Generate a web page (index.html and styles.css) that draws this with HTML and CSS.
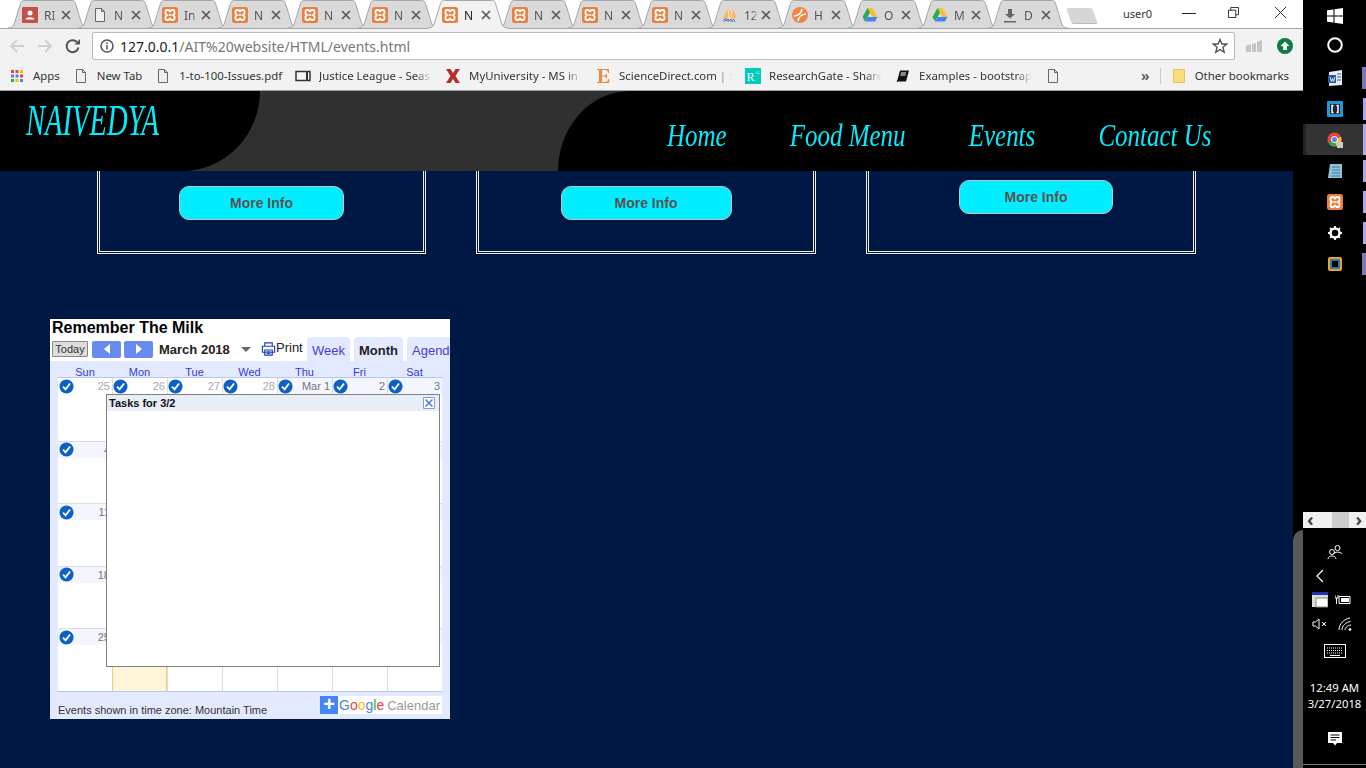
FILE: index.html
```html
<!DOCTYPE html>
<html lang="en">
<head>
    <meta charset="UTF-8">
    <title>Naivedya - Events</title>
    <link rel="stylesheet" href="styles.css">
</head>
<body>

<svg class="defs" aria-hidden="true">
    <symbol id="tab-bg" viewBox="0 0 80 29">
        <path d="M0 28C4 28 5.5 26 6.5 23L12.5 3.5C13 1.5 14.5 .5 16.5 .5H63.5C65.5 .5 67 1.5 67.5 3.5L73.5 23C74.500 26 76 28 80 28" fill="#d9d9d9" stroke="#a6a6a6"/>
    </symbol>
    <symbol id="tab-bg-active" viewBox="0 0 80 29">
        <path d="M0 28C4 28 5.5 26 6.5 23L12.5 3.5C13 1.5 14.5 .5 16.5 .5H63.5C65.5 .5 67 1.5 67.5 3.5L73.5 23C74.500 26 76 28 80 28V29H0Z" fill="#f2f2f2"/>
        <path d="M0 28C4 28 5.5 26 6.5 23L12.5 3.5C13 1.5 14.5 .5 16.5 .5H63.5C65.5 .5 67 1.5 67.5 3.5L73.5 23C74.500 26 76 28 80 28" fill="none" stroke="#a6a6a6"/>
    </symbol>
    <symbol id="ic-xampp" viewBox="0 0 16 16">
        <rect width="16" height="16" rx="2.5" fill="#ec7f3e"/>
        <path d="M3.5 4.5Q3.500 3 5 3H6.500L8 4.500 9.500 3H11Q12.500 3 12.500 4.500V6.500L11 8 12.500 9.500V11.500Q12.500 13 11 13H9.500L8 11.500 6.500 13H5Q3.500 13 3.500 11.500V9.500L5 8 3.500 6.500Z" fill="none" stroke="#fff" stroke-width="1.8" stroke-linejoin="round"/>
        <path d="M6.5 8H9.500" stroke="#fff" stroke-width="1.5"/>
    </symbol>
    <symbol id="ic-doc" viewBox="0 0 16 16">
        <path d="M3.5 1.500H9.500L12.500 4.500V14.500H3.500ZM9.500 1.500V4.500H12.500" fill="#efefef" stroke="#666"/>
    </symbol>
    <symbol id="ic-drive" viewBox="0 0 16 16">
        <path d="M5.5 1H10.500L15.500 10H10.500Z" fill="#fbc02d"/>
        <path d="M5.5 1L.5 10 3 14.500 8 5.500Z" fill="#2da94f"/>
        <path d="M3 14.5H13L15.500 10H5.500Z" fill="#4285f4"/>
    </symbol>
    <symbol id="ic-x" viewBox="0 0 10 10">
        <path d="M1 1L9 9M9 1L1 9" stroke="#5a5a5a" stroke-width="1.7" fill="none"/>
    </symbol>
    <symbol id="ic-check" viewBox="0 0 16 16">
        <circle cx="8" cy="8" r="7.5" fill="#0b62c4"/>
        <path d="M4.3 8.200L7 11 11.800 4.800" fill="none" stroke="#fff" stroke-width="2"/>
    </symbol>
</svg>

<div class="screen">
    <div class="window">
        <div class="chrome">
            <div class="tabstrip">
                <div class="tabs">
                    <div class="tab"><svg class="tab-shape"><use href="#tab-bg"/></svg>
                        <svg class="favicon" viewBox="0 0 16 16"><rect width="16" height="16" rx="1" fill="#c5504a"/><circle cx="8" cy="6" r="2.5" fill="#fff"/><path d="M3.5 12.500C4 9.500 12 9.500 12.500 12.500Z" fill="#fff"/></svg>
                        <span class="tab-title">RI</span><svg class="tab-x"><use href="#ic-x"/></svg></div>
                    <div class="tab"><svg class="tab-shape"><use href="#tab-bg"/></svg>
                        <svg class="favicon"><use href="#ic-doc"/></svg>
                        <span class="tab-title">N</span><svg class="tab-x"><use href="#ic-x"/></svg></div>
                    <div class="tab"><svg class="tab-shape"><use href="#tab-bg"/></svg>
                        <svg class="favicon"><use href="#ic-xampp"/></svg>
                        <span class="tab-title">In</span><svg class="tab-x"><use href="#ic-x"/></svg></div>
                    <div class="tab"><svg class="tab-shape"><use href="#tab-bg"/></svg>
                        <svg class="favicon"><use href="#ic-xampp"/></svg>
                        <span class="tab-title">N</span><svg class="tab-x"><use href="#ic-x"/></svg></div>
                    <div class="tab"><svg class="tab-shape"><use href="#tab-bg"/></svg>
                        <svg class="favicon"><use href="#ic-xampp"/></svg>
                        <span class="tab-title">N</span><svg class="tab-x"><use href="#ic-x"/></svg></div>
                    <div class="tab"><svg class="tab-shape"><use href="#tab-bg"/></svg>
                        <svg class="favicon"><use href="#ic-xampp"/></svg>
                        <span class="tab-title">N</span><svg class="tab-x"><use href="#ic-x"/></svg></div>
                    <div class="tab tab-active"><svg class="tab-shape"><use href="#tab-bg-active"/></svg>
                        <svg class="favicon"><use href="#ic-xampp"/></svg>
                        <span class="tab-title">N</span><svg class="tab-x"><use href="#ic-x"/></svg></div>
                    <div class="tab"><svg class="tab-shape"><use href="#tab-bg"/></svg>
                        <svg class="favicon"><use href="#ic-xampp"/></svg>
                        <span class="tab-title">N</span><svg class="tab-x"><use href="#ic-x"/></svg></div>
                    <div class="tab"><svg class="tab-shape"><use href="#tab-bg"/></svg>
                        <svg class="favicon"><use href="#ic-xampp"/></svg>
                        <span class="tab-title">N</span><svg class="tab-x"><use href="#ic-x"/></svg></div>
                    <div class="tab"><svg class="tab-shape"><use href="#tab-bg"/></svg>
                        <svg class="favicon"><use href="#ic-xampp"/></svg>
                        <span class="tab-title">N</span><svg class="tab-x"><use href="#ic-x"/></svg></div>
                    <div class="tab"><svg class="tab-shape"><use href="#tab-bg"/></svg>
                        <svg class="favicon" viewBox="0 0 16 16"><path d="M1 11L6 1 8 5 10 1 15 11Z" fill="#f5b862"/><path d="M6 2L7 11M10 2L9 11" stroke="#fff" stroke-width=".7"/><path d="M2 15V12H5V13.500H3M6 15V12L7.500 14 9 12V15M10 15L11.500 12 13 15" fill="none" stroke="#4a5a9a" stroke-width=".8"/></svg>
                        <span class="tab-title">12</span><svg class="tab-x"><use href="#ic-x"/></svg></div>
                    <div class="tab"><svg class="tab-shape"><use href="#tab-bg"/></svg>
                        <svg class="favicon" viewBox="0 0 16 16"><circle cx="8" cy="8" r="8" fill="#f0854a"/><path d="M2 9C5 9 9 7 10 2M14 7C11 7 7 9 6 14" fill="none" stroke="#fff" stroke-width="1.6"/></svg>
                        <span class="tab-title">H</span><svg class="tab-x"><use href="#ic-x"/></svg></div>
                    <div class="tab"><svg class="tab-shape"><use href="#tab-bg"/></svg>
                        <svg class="favicon"><use href="#ic-drive"/></svg>
                        <span class="tab-title">O</span><svg class="tab-x"><use href="#ic-x"/></svg></div>
                    <div class="tab"><svg class="tab-shape"><use href="#tab-bg"/></svg>
                        <svg class="favicon"><use href="#ic-drive"/></svg>
                        <span class="tab-title">M</span><svg class="tab-x"><use href="#ic-x"/></svg></div>
                    <div class="tab"><svg class="tab-shape"><use href="#tab-bg"/></svg>
                        <svg class="favicon" viewBox="0 0 16 16"><path d="M6 2H10V7H13L8 11.500 3 7H6ZM2 14H14V15.500H2Z" fill="#666"/></svg>
                        <span class="tab-title">D</span><svg class="tab-x"><use href="#ic-x"/></svg></div>
                </div>
                <div class="new-tab"></div>
                <span class="profile">user0</span>
                <div class="win-controls">
                    <svg class="win-min" viewBox="0 0 16 12"><path d="M1 6.500H15" stroke="#222"/></svg>
                    <svg class="win-max" viewBox="0 0 12 12"><path d="M.5 3.500H8.500V11.500H.5ZM3 3.500V.5H11.500V8.500H8.500" fill="none" stroke="#222"/></svg>
                    <svg class="win-close" viewBox="0 0 14 14"><path d="M1 1L13 13M13 1L1 13" stroke="#222"/></svg>
                </div>
            </div>

            <div class="toolbar">
                <svg class="nav-ic" viewBox="0 0 16 16"><path d="M15 8H2M8 2L2 8 8 14" fill="none" stroke="#cfcfcf" stroke-width="1.8"/></svg>
                <svg class="nav-ic" viewBox="0 0 16 16"><path d="M1 8H14M8 2L14 8 8 14" fill="none" stroke="#cfcfcf" stroke-width="1.8"/></svg>
                <svg class="nav-ic" viewBox="0 0 16 16"><path d="M13.5 9.500A6 6 0 1 1 12 4" fill="none" stroke="#555" stroke-width="2"/><path d="M9.5 6.500H15V1Z" fill="#555"/></svg>
                <div class="omnibox">
                    <svg class="info-ic" viewBox="0 0 14 14"><circle cx="7" cy="7" r="6" fill="none" stroke="#555" stroke-width="1.5"/><path d="M7 6V10.500M7 3.300V5" stroke="#555" stroke-width="1.5"/></svg>
                    <span class="url"><b>127.0.0.1</b>/AIT%20website/HTML/events.html</span>
                    <svg class="star-ic" viewBox="0 0 16 16"><path d="M8 1.500L9.900 6H14.800L10.900 9.300 12.200 14.300 8 11.600 3.800 14.300 5.100 9.300 1.200 6H6.100Z" fill="none" stroke="#555" stroke-width="1.4"/></svg>
                </div>
                <svg class="ext-ic" viewBox="0 0 16 16"><path d="M0 8L5 6V14H0ZM6 6L10 5V14H6ZM11 4L16 2V14H11Z" fill="#c4c4c4"/></svg>
                <svg class="ext-ic" viewBox="0 0 16 16"><circle cx="8" cy="8" r="8" fill="#0c7c3f"/><path d="M8 3.500L12.500 8H10V12H6V8H3.500Z" fill="#fff"/></svg>
            </div>

            <div class="bookmarks">
                <a class="bm"><svg class="bm-ic" viewBox="0 0 16 16"><g fill="#ea4335"><rect x="2" y="2" width="3" height="3"/><rect x="6.5" y="2" width="3" height="3"/></g><rect x="11" y="2" width="3" height="3" fill="#fbbc05"/><g fill="#4285f4"><rect x="2" y="6.5" width="3" height="3"/><rect x="6.5" y="6.5" width="3" height="3"/></g><rect x="11" y="6.5" width="3" height="3" fill="#ea4335"/><rect x="2" y="11" width="3" height="3" fill="#34a853"/><rect x="6.5" y="11" width="3" height="3" fill="#fbbc05"/><rect x="11" y="11" width="3" height="3" fill="#4285f4"/></svg><span>Apps</span></a>
                <a class="bm"><svg class="bm-ic"><use href="#ic-doc"/></svg><span>New Tab</span></a>
                <a class="bm"><svg class="bm-ic"><use href="#ic-doc"/></svg><span>1-to-100-Issues.pdf</span></a>
                <a class="bm bm-cut"><svg class="bm-ic" viewBox="0 0 16 16"><path d="M1 3.500H15V12.500H1Z" fill="none" stroke="#333" stroke-width="1.5"/><path d="M12 3V13" stroke="#333" stroke-width="2"/></svg><span>Justice League - Seas</span></a>
                <a class="bm bm-cut"><svg class="bm-ic" viewBox="0 0 16 16"><path d="M1 1H5.500L8 5 10.500 1H15L10.500 8 15 15H10.500L8 11 5.500 15H1L5.500 8Z" fill="#b5302a"/></svg><span>MyUniversity - MS in</span></a>
                <a class="bm bm-cut"><svg class="bm-ic" viewBox="0 0 16 16"><path d="M2 1H14V5H13C13 3 12 2 10 2H7V7.500H9.500C11 7.500 11 6.500 11 6H12V10.500H11C11 9.500 11 8.500 9.500 8.500H7V14H10C12 14 13 13 13.500 11H14.500L14 15H2V14C4 14 4 14 4 12V4C4 2 4 2 2 2Z" fill="#f0883c"/></svg><span>ScienceDirect.com | S</span></a>
                <a class="bm bm-cut"><svg class="bm-ic" viewBox="0 0 16 16"><rect width="16" height="16" fill="#00ccbb"/><text class="rg-text" x="1.5" y="13">R</text><text class="rg-sup" x="11" y="6">G</text></svg><span>ResearchGate - Share</span></a>
                <a class="bm bm-cut"><svg class="bm-ic" viewBox="0 0 16 16"><path d="M5 2.500H14L11 13.500H2Z" fill="#111"/><path d="M3 12L2 14" stroke="#111"/><path d="M6 5H11M5.500 7H10.500" stroke="#fff"/></svg><span>Examples - bootstrap</span></a>
                <a class="bm"><svg class="bm-ic"><use href="#ic-doc"/></svg></a>
                <div class="bm-right">
                    <span class="bm-more">&raquo;</span>
                    <span class="bm-sep"></span>
                    <a class="bm"><svg class="bm-ic" viewBox="0 0 16 16"><path d="M2.5 1.500H13.500V14.500H2.500Z" fill="#fddc78" stroke="#e8c25a"/></svg><span>Other bookmarks</span></a>
                </div>
            </div>
        </div>

        <div class="site">
            <header class="site-header">
                <div class="brand"><span>NAIVEDYA</span></div>
                <nav class="site-nav">
                    <div class="nav-list">
                        <a>Home</a>
                        <a>Food Menu</a>
                        <a>Events</a>
                        <a>Contact Us</a>
                    </div>
                </nav>
            </header>

            <div class="site-body">
                <main class="content">
                    <div class="card-row">
                        <div class="card card-one"><button class="more-btn">More Info</button></div>
                        <div class="card card-two"><button class="more-btn">More Info</button></div>
                        <div class="card card-three"><button class="more-btn">More Info</button></div>
                    </div>

                    <div class="cal">
                        <div class="cal-title">Remember The Milk</div>
                        <div class="cal-bar">
                            <button class="cal-today">Today</button>
                            <span class="cal-arrow"><i class="arrow-left"></i></span>
                            <span class="cal-arrow"><i class="arrow-right"></i></span>
                            <span class="cal-month">March 2018</span>
                            <i class="cal-caret"></i>
                            <svg class="cal-print" viewBox="0 0 16 16"><path d="M4 5V1.500H12V5M1.500 5H14.500V11.500H1.500ZM4 9H12V14.500H4ZM6 11H10M6 12.800H10" fill="#fff" stroke="#1a3ec0" stroke-width="1.2"/></svg>
                            <span class="cal-print-label">Print</span>
                            <span class="cal-tab cal-tab-week">Week</span>
                            <span class="cal-tab cal-tab-active">Month</span>
                            <span class="cal-tab">Agenda</span>
                        </div>
                        <div class="cal-body">
                            <div class="cal-week">
                                <span>Sun</span><span>Mon</span><span>Tue</span><span>Wed</span><span>Thu</span><span>Fri</span><span>Sat</span>
                            </div>
                            <div class="cal-grid">
                                <div class="day other"><div class="day-head"><svg class="day-check"><use href="#ic-check"/></svg>25</div></div>
                                <div class="day other"><div class="day-head"><svg class="day-check"><use href="#ic-check"/></svg>26</div></div>
                                <div class="day other"><div class="day-head"><svg class="day-check"><use href="#ic-check"/></svg>27</div></div>
                                <div class="day other"><div class="day-head"><svg class="day-check"><use href="#ic-check"/></svg>28</div></div>
                                <div class="day"><div class="day-head"><svg class="day-check"><use href="#ic-check"/></svg>Mar 1</div></div>
                                <div class="day"><div class="day-head"><svg class="day-check"><use href="#ic-check"/></svg>2</div></div>
                                <div class="day"><div class="day-head"><svg class="day-check"><use href="#ic-check"/></svg>3</div></div>

                                <div class="day"><div class="day-head"><svg class="day-check"><use href="#ic-check"/></svg>4</div></div>
                                <div class="day"><div class="day-head"><svg class="day-check"><use href="#ic-check"/></svg>5</div></div>
                                <div class="day"><div class="day-head"><svg class="day-check"><use href="#ic-check"/></svg>6</div></div>
                                <div class="day"><div class="day-head"><svg class="day-check"><use href="#ic-check"/></svg>7</div></div>
                                <div class="day"><div class="day-head"><svg class="day-check"><use href="#ic-check"/></svg>8</div></div>
                                <div class="day"><div class="day-head"><svg class="day-check"><use href="#ic-check"/></svg>9</div></div>
                                <div class="day"><div class="day-head"><svg class="day-check"><use href="#ic-check"/></svg>10</div></div>

                                <div class="day"><div class="day-head"><svg class="day-check"><use href="#ic-check"/></svg>11</div></div>
                                <div class="day"><div class="day-head"><svg class="day-check"><use href="#ic-check"/></svg>12</div></div>
                                <div class="day"><div class="day-head"><svg class="day-check"><use href="#ic-check"/></svg>13</div></div>
                                <div class="day"><div class="day-head"><svg class="day-check"><use href="#ic-check"/></svg>14</div></div>
                                <div class="day"><div class="day-head"><svg class="day-check"><use href="#ic-check"/></svg>15</div></div>
                                <div class="day"><div class="day-head"><svg class="day-check"><use href="#ic-check"/></svg>16</div></div>
                                <div class="day"><div class="day-head"><svg class="day-check"><use href="#ic-check"/></svg>17</div></div>

                                <div class="day"><div class="day-head"><svg class="day-check"><use href="#ic-check"/></svg>18</div></div>
                                <div class="day"><div class="day-head"><svg class="day-check"><use href="#ic-check"/></svg>19</div></div>
                                <div class="day"><div class="day-head"><svg class="day-check"><use href="#ic-check"/></svg>20</div></div>
                                <div class="day"><div class="day-head"><svg class="day-check"><use href="#ic-check"/></svg>21</div></div>
                                <div class="day"><div class="day-head"><svg class="day-check"><use href="#ic-check"/></svg>22</div></div>
                                <div class="day"><div class="day-head"><svg class="day-check"><use href="#ic-check"/></svg>23</div></div>
                                <div class="day"><div class="day-head"><svg class="day-check"><use href="#ic-check"/></svg>24</div></div>

                                <div class="day"><div class="day-head"><svg class="day-check"><use href="#ic-check"/></svg>25</div></div>
                                <div class="day today"><div class="day-head"><svg class="day-check"><use href="#ic-check"/></svg>26</div></div>
                                <div class="day"><div class="day-head"><svg class="day-check"><use href="#ic-check"/></svg>27</div></div>
                                <div class="day"><div class="day-head"><svg class="day-check"><use href="#ic-check"/></svg>28</div></div>
                                <div class="day"><div class="day-head"><svg class="day-check"><use href="#ic-check"/></svg>29</div></div>
                                <div class="day"><div class="day-head"><svg class="day-check"><use href="#ic-check"/></svg>30</div></div>
                                <div class="day"><div class="day-head"><svg class="day-check"><use href="#ic-check"/></svg>31</div></div>
                            </div>
                            <div class="cal-foot">
                                <span class="cal-zone">Events shown in time zone: Mountain Time</span>
                                <span class="gcal">
                                    <span class="gcal-plus">+</span>
                                    <span class="gcal-word"><i class="g-blue">G</i><i class="g-red">o</i><i class="g-yellow">o</i><i class="g-blue">g</i><i class="g-green">l</i><i class="g-red">e</i></span>
                                    <span class="gcal-name">Calendar</span>
                                </span>
                            </div>
                        </div>

                        <div class="cal-popup">
                            <div class="popup-head">
                                <span>Tasks for 3/2</span>
                                <svg class="popup-x" viewBox="0 0 12 12"><path d="M.5 .5H11.500V11.500H.5Z" fill="#fff" stroke="#7f9fe0"/><path d="M2.5 2.500L9.500 9.500M9.500 2.500L2.500 9.500" stroke="#4a7ad8" stroke-width="1.5"/></svg>
                            </div>
                        </div>
                    </div>
                </main>
                <div class="edge"><div class="edge-tab"></div></div>
            </div>
        </div>
    </div>

    <aside class="taskbar">
        <div class="task-apps">
            <div class="task-item"><svg viewBox="0 0 16 16"><path d="M0 2.300L6.500 1.400V7.500H0ZM7.500 1.200L16 0V7.500H7.500ZM0 8.500H6.500V14.600L0 13.700ZM7.500 8.500H16V16L7.500 14.800Z" fill="#fff"/></svg></div>
            <div class="task-item task-cortana"><svg viewBox="0 0 16 16"><circle cx="8" cy="8" r="6.8" fill="none" stroke="#fff" stroke-width="2"/></svg></div>
            <div class="task-item running running-dim"><svg viewBox="0 0 16 16"><path d="M2 2L15 0V15L2 16Z" fill="#e6ebf7"/><path d="M1 5H9V13H1Z" fill="#2b579a"/><path d="M3 7L4.500 11.500 5.500 8.500 6.500 11.500 8 7" fill="none" stroke="#fff" stroke-width=".8"/><path d="M10 4H14M10 7H14M10 10H14" stroke="#2b579a"/></svg></div>
            <div class="task-item running"><svg viewBox="0 0 16 16"><rect width="16" height="16" rx="1" fill="#1b9ad6"/><rect x="3" y="3" width="10" height="10" fill="#223"/><path d="M6.5 4.500H5V11.500H6.500M9.500 4.500H11V11.500H9.500" fill="none" stroke="#fff" stroke-width="1.5"/></svg></div>
            <div class="task-item running task-active"><svg viewBox="0 0 16 16"><circle cx="7.5" cy="7.500" r="7" fill="#e5483a"/><path d="M7.5 7.500L1.500 11A7 7 0 0 0 9.500 14.200Z" fill="#34a853"/><path d="M7.5 7.500L9.500 14.200A7 7 0 0 0 14 5Z" fill="#fbc02d"/><circle cx="7.5" cy="7.500" r="3" fill="#4285f4" stroke="#fff"/><rect x="10" y="10" width="6" height="6" fill="#ccc"/></svg></div>
            <div class="task-item running"><svg viewBox="0 0 16 16"><path d="M3 1H15V15H1Z" fill="#8fc3d8"/><path d="M5 4H13M5 7H13M4.500 10H13M4 13H13" stroke="#3b7f9b"/></svg></div>
            <div class="task-item running"><svg><use href="#ic-xampp"/></svg></div>
            <div class="task-item running"><svg viewBox="0 0 16 16"><circle cx="8" cy="8" r="4.5" fill="none" stroke="#fff" stroke-width="2.5"/><path d="M8 1V15M1 8H15M3 3L13 13M13 3L3 13" stroke="#fff" stroke-width="1.8" stroke-dasharray="2.500 9"/></svg></div>
            <div class="task-item running running-dim"><svg viewBox="0 0 16 16"><rect x="1" y="1" width="14" height="14" rx="2" fill="#f0a21e"/><rect x="3" y="3" width="10" height="10" rx="1" fill="#1c7fb8"/><rect x="5" y="5" width="6" height="6" fill="#000"/></svg></div>
        </div>

        <div class="task-scroll">
            <span class="scroll-btn">&lsaquo;</span>
            <span class="scroll-thumb"></span>
            <span class="scroll-btn">&rsaquo;</span>
        </div>

        <div class="tray">
            <svg class="tray-people" viewBox="0 0 16 16"><circle cx="10.5" cy="4" r="2.5" fill="none" stroke="#fff"/><path d="M6.5 10C7 7.500 14 7.500 15 10" fill="none" stroke="#fff"/><circle cx="5" cy="8" r="2.5" fill="none" stroke="#fff"/><path d="M1 15C1 11 9 11 9 15" fill="none" stroke="#fff"/></svg>
            <div class="tray-row tray-chevron"><svg viewBox="0 0 16 16"><path d="M11 2L5 8 11 14" fill="none" stroke="#fff" stroke-width="1.2"/></svg></div>
            <div class="tray-row">
                <svg viewBox="0 0 16 16"><rect width="16" height="15" fill="#ddd"/><rect width="16" height="3" fill="#2233aa"/><rect x="4" y="6" width="12" height="9" fill="#fff" stroke="#888"/></svg>
                <svg viewBox="0 0 16 16"><path d="M4 4.500H15V11.500H4Z" fill="none" stroke="#fff"/><rect x="6" y="6" width="8" height="4" fill="#fff"/><path d="M0 3V6H3V3M1.500 6V12" stroke="#fff" fill="none"/></svg>
            </div>
            <div class="tray-row tray-net">
                <svg viewBox="0 0 16 16"><path d="M1 6H3.500L7 3V13L3.500 10H1Z" fill="none" stroke="#fff"/><path d="M10 6L14 10M14 6L10 10" stroke="#fff"/></svg>
                <svg viewBox="0 0 16 16"><path d="M2 14C2 8 7 3 13 2M5 14C5 10 9 6 13.500 5.500M8 14C8 12 10 9.500 14 9" fill="none" stroke="#fff"/><circle cx="13" cy="13.500" r="1.3" fill="#fff"/></svg>
            </div>
            <svg class="tray-keys" viewBox="0 0 22 14"><rect x=".5" y=".5" width="21" height="13" fill="none" stroke="#fff"/><path d="M3 4H19M3 6.500H19M3 9H19" stroke="#fff" stroke-dasharray="1 1"/><path d="M6 11.500H16" stroke="#fff"/></svg>
            <div class="clock">12:49 AM<br>3/27/2018</div>
            <svg class="tray-action" viewBox="0 0 16 16"><path d="M1 1H15V12H10L8 14.500 6 12H1Z" fill="#fff"/><path d="M3.5 4H12.500M3.500 6.500H12.500M3.500 9H9" stroke="#000"/></svg>
            <div class="task-line"></div>
        </div>
    </aside>
</div>

</body>
</html>
```

FILE: styles.css
```css
* {
    box-sizing: border-box;
}

html, body {
    margin: 0;
    height: 768px;
    overflow: hidden;
    background: #000;
}

.defs {
    display: none;
}

.screen {
    display: flex;
    height: 768px;
    font-family: "Noto Sans", sans-serif;
}

.window {
    width: 1303px;
    display: flex;
    flex-direction: column;
}

/* browser frame */
.chrome {
    height: 91px;
    background: #f2f2f2;
    border-bottom: 1px solid #a0a0a0;
}

.tabstrip {
    height: 28px;
    background: #fff;
    display: flex;
    align-items: flex-start;
}

.tabs {
    display: flex;
    padding-left: 8px;
}

.tab {
    position: relative;
    width: 80px;
    height: 29px;
    margin-right: -10px;
    display: flex;
    align-items: center;
    padding: 1px 0 0 14px;
    font-size: 12px;
    color: #555;
}

.tab-shape {
    position: absolute;
    left: 0;
    top: 0;
    width: 80px;
    height: 29px;
}

.tab-active {
    z-index: 2;
    color: #222;
}

.favicon {
    position: relative;
    width: 16px;
    height: 16px;
    flex: none;
}

.tab-title {
    position: relative;
    width: 14px;
    margin-left: 6px;
    overflow: hidden;
    white-space: nowrap;
    -webkit-mask-image: linear-gradient(to right, #000 60%, transparent);
    mask-image: linear-gradient(to right, #000 60%, transparent);
}

.tab-x {
    position: relative;
    width: 10px;
    height: 10px;
    margin-left: 3px;
    flex: none;
}

.new-tab {
    width: 26px;
    height: 16px;
    margin: 8px 0 0 11px;
    background: #d6d6d6;
    border-bottom: 1px solid #bbb;
    border-radius: 2px;
    transform: skewX(20deg);
}

.profile {
    margin: 6px 0 0 28px;
    font-size: 11px;
    color: #333;
}

.win-controls {
    display: flex;
    align-items: center;
    gap: 31px;
    margin: 6px 0 0 29px;
}

.win-min {
    width: 16px;
    height: 12px;
}

.win-max {
    width: 11px;
    height: 11px;
}

.win-close {
    width: 13px;
    height: 13px;
    margin-left: 4px;
}

.toolbar {
    height: 34px;
    border-top: 1px solid #a6a6a6;
    display: flex;
    align-items: center;
    padding: 1px 9px 0;
}

.nav-ic {
    width: 16px;
    height: 16px;
    margin-right: 12px;
    flex: none;
}

.omnibox {
    width: 1143px;
    height: 28px;
    margin-left: -1px;
    background: #fff;
    border: 1px solid #bbb;
    border-radius: 2px;
    display: flex;
    align-items: center;
    padding: 0 6px 0 7px;
}

.info-ic {
    width: 14px;
    height: 14px;
    flex: none;
}

.url {
    margin-left: 6px;
    font-size: 14px;
    color: #777;
}

.url b {
    font-weight: normal;
    color: #222;
}

.star-ic {
    width: 16px;
    height: 16px;
    margin-left: auto;
}

.ext-ic {
    width: 16px;
    height: 16px;
    flex: none;
    margin-left: 11px;
}

.ext-ic + .ext-ic {
    margin-left: 15px;
}

.bookmarks {
    height: 28px;
    display: flex;
    align-items: center;
    gap: 13px;
    padding: 0 0 1px 9px;
    font-size: 11.4px;
    color: #333;
}

.bm {
    display: flex;
    align-items: center;
    gap: 8px;
    white-space: nowrap;
}

.bm-ic {
    width: 16px;
    height: 16px;
    flex: none;
}

.bm-cut span {
    width: 113px;
    overflow: hidden;
    -webkit-mask-image: linear-gradient(to right, #000 85%, transparent);
    mask-image: linear-gradient(to right, #000 85%, transparent);
}

.rg-text {
    font: 12px "Liberation Serif", serif;
    fill: #fff;
}

.rg-sup {
    font: 5px "Liberation Serif", serif;
    fill: #fff;
}

.bm-right {
    margin-left: auto;
    display: flex;
    align-items: center;
    padding-right: 14px;
}

.bm-more {
    font-size: 14px;
    color: #666;
    font-weight: bold;
}

.bm-sep {
    width: 1px;
    height: 16px;
    background: #ccc;
    margin: 0 2px 0 10px;
}

.bm-right .bm {
    margin-left: 8px;
}

/* the site inside the page */
.site {
    flex: 1;
    display: flex;
    flex-direction: column;
    background: #000;
}

.site-header {
    height: 80px;
    display: flex;
    justify-content: space-between;
    background: #303030;
}

.brand {
    width: 260px;
    background: #000;
    border-bottom-right-radius: 78px 80px;
    padding: 8px 0 0 26px;
    color: #00eeff;
    font: italic 44px/44px "Liberation Serif", cursive;
    white-space: nowrap;
}

.brand span {
    display: inline-block;
    transform: scaleX(.65);
    transform-origin: left;
}

.site-nav {
    width: 745px;
    background: #000;
    border-top-left-radius: 72px 80px;
    padding: 26px 0 0 109px;
    color: #00eeff;
    font: italic 32px "Liberation Serif", cursive;
    white-space: nowrap;
}

.nav-list {
    display: flex;
    gap: 81px;
    transform: scaleX(.78);
    transform-origin: left;
}

.site-body {
    flex: 1;
    display: flex;
}

.content {
    width: 1293px;
    background: #001944;
}

.edge {
    flex: 1;
    padding-top: 359px;
}

.edge-tab {
    height: 100%;
    background: #595959;
    border-top-left-radius: 10px;
}

.card-row {
    display: flex;
    gap: 50px;
    padding-left: 97px;
}

.card {
    height: 83px;
    border: 3px double #f3efdf;
    border-top: none;
    text-align: center;
    padding-top: 15px;
}

.card-one {
    width: 329px;
}

.card-two {
    width: 340px;
}

.card-three {
    width: 330px;
    padding: 9px 0 0 10px;
}

.more-btn {
    height: 34px;
    background: #00eeff;
    border: 1px solid #c4c4c4;
    border-radius: 10px;
    color: #555;
    font: bold 14px "Liberation Sans", sans-serif;
}

.card-one .more-btn {
    width: 165px;
}

.card-two .more-btn {
    width: 171px;
}

.card-three .more-btn {
    width: 154px;
}

/* embedded calendar */
.cal {
    position: relative;
    width: 400px;
    height: 400px;
    margin: 65px 0 0 50px;
    background: #e3e9ff;
    font-family: "Liberation Sans", sans-serif;
    overflow: hidden;
}

.cal-title {
    height: 18px;
    padding-left: 2px;
    background: #fff;
    color: #000;
    font-size: 16px;
    font-weight: bold;
    line-height: 18px;
}

.cal-bar {
    height: 24px;
    background: #fff;
    display: flex;
    align-items: center;
    white-space: nowrap;
    padding-left: 2px;
}

.cal-bar > * {
    flex: none;
}

.cal-today {
    width: 36px;
    height: 16px;
    padding: 0;
    background: #ddd;
    border: 1px solid #888;
    border-radius: 1px;
    color: #333;
    font: 11px "Liberation Sans", sans-serif;
}

.cal-arrow {
    width: 29px;
    height: 17px;
    margin-left: 4px;
    background: #668cf0;
    border-radius: 2px;
    display: flex;
    align-items: center;
    justify-content: center;
}

.cal-arrow + .cal-arrow {
    margin-left: 3px;
}

.arrow-left {
    border: 5px solid transparent;
    border-left: none;
    border-right: 6px solid #fff;
}

.arrow-right {
    border: 5px solid transparent;
    border-right: none;
    border-left: 6px solid #fff;
}

.cal-month {
    margin-left: 6px;
    font-size: 13px;
    font-weight: bold;
    color: #222;
    width: 82px;
}

.cal-caret {
    border: 5px solid transparent;
    border-top: 5px solid #666;
    border-bottom: none;
}

.cal-print {
    width: 15px;
    height: 16px;
    margin-left: 10px;
}

.cal-print-label {
    font-size: 13px;
    color: #222;
    width: 31px;
    margin-bottom: 3px;
}

.cal-tab {
    align-self: stretch;
    padding: 6px 5px 0;
    margin-right: 4px;
    background: #e3e9ff;
    border-radius: 4px 4px 0 0;
    color: #4a3cd0;
    font-size: 13px;
}

.cal-tab-week {
    width: 43px;
}

.cal-tab-active {
    width: 49px;
    color: #222;
    font-weight: bold;
}

.cal-body {
    padding: 0 8px;
}

.cal-week {
    height: 16px;
    display: grid;
    grid-template-columns: 54px repeat(6, 55px);
    text-align: center;
    color: #3a3ad8;
    font-size: 11px;
    line-height: 22px;
}

.cal-grid {
    height: 315px;
    display: grid;
    grid-template-columns: 54px repeat(6, 55px);
    grid-auto-rows: 1fr;
    background: #fff;
    border-top: 1px solid #b5c7f5;
    border-bottom: 1px solid #b5c7f5;
}

.day {
    border-left: 1px solid #ddd;
    border-top: 1px solid #ddd;
}

.day:nth-child(7n+1) {
    border-left: none;
}

.day:nth-child(-n+7) {
    border-top: none;
}

.day-head {
    height: 16px;
    display: flex;
    align-items: center;
    justify-content: space-between;
    padding: 0 2px 0 0;
    background: #f3f5ff;
    color: #777;
    font-size: 11px;
}

.day:nth-child(7n+1) .day-head {
    padding-left: 1px;
}

.other .day-head {
    background: #fff;
    color: #aaa;
}

.day-check {
    width: 15px;
    height: 15px;
    flex: none;
}

.today {
    background: #fff5d8;
    border-left: 1px solid #fbc96b;
    border-right: 1px solid #fbc96b;
}

.cal-foot {
    height: 27px;
    display: flex;
    justify-content: space-between;
    padding-top: 4px;
}

.cal-zone {
    align-self: flex-end;
    margin-bottom: 3px;
    font-size: 11px;
    color: #333;
}

.gcal {
    height: 18px;
    display: flex;
    align-items: center;
    background: #fff;
    font-size: 13px;
    white-space: nowrap;
}

.gcal-plus {
    width: 18px;
    height: 18px;
    margin-right: 1px;
    background: #4285f4;
    color: #fff;
    font-size: 20px;
    font-weight: bold;
    line-height: 17px;
    text-align: center;
}

.gcal-word i {
    font-style: normal;
}

.gcal-word {
    font-size: 14px;
}

.gcal-name {
    margin: 0 2px 0 3px;
    color: #999;
}

.g-blue { color: #4285f4; }
.g-red { color: #ea4335; }
.g-yellow { color: #fbbc05; }
.g-green { color: #34a853; }

.cal-popup {
    position: absolute;
    left: 56px;
    top: 75px;
    width: 334px;
    height: 273px;
    background: #fff;
    border: 1px solid #808080;
}

.popup-head {
    height: 16px;
    background: #e8eef7;
    display: flex;
    align-items: center;
    justify-content: space-between;
    padding: 0 4px 0 2px;
    color: #111;
    font-size: 11px;
    font-weight: bold;
}

.popup-x {
    width: 12px;
    height: 12px;
}

/* windows taskbar */
.taskbar {
    width: 63px;
    background: #000;
    display: flex;
    flex-direction: column;
    color: #fff;
}

.task-apps {
    height: 280px;
}

.task-item {
    height: 31px;
    display: flex;
    align-items: center;
    justify-content: center;
}

.task-item svg {
    width: 16px;
    height: 16px;
}

.task-cortana svg {
    margin-bottom: 3px;
}

.task-item.running {
    background: linear-gradient(#b0a8e8, #b0a8e8) right center / 3px 22px no-repeat;
}

.task-item.running-dim {
    background-image: linear-gradient(#7d78b8, #7d78b8);
    background-size: 4px 22px;
}

.task-item.task-active {
    background: linear-gradient(#b0a8e8, #b0a8e8) right center / 3px 100% no-repeat, linear-gradient(#222, #222) left center / 3px 100% no-repeat, #333;
}

.task-scroll {
    height: 16px;
    margin-top: 232px;
    background: #f0f0f0;
    display: flex;
    align-items: center;
    padding: 0 4px;
    color: #444;
    font-size: 18px;
    font-weight: bold;
}

.scroll-btn {
    line-height: 14px;
    margin-top: -3px;
}

.scroll-thumb {
    width: 17px;
    height: 16px;
    margin: 0 6px 0 auto;
    background: #ccc;
}

.tray {
    display: flex;
    flex-direction: column;
    align-items: center;
    padding-top: 16px;
}

.tray-people {
    width: 16px;
    height: 16px;
    margin-bottom: 4px;
}

.tray-row {
    width: 100%;
    height: 24px;
    display: flex;
    align-items: center;
    justify-content: space-between;
    padding: 0 15px 0 9px;
}

.tray-row svg {
    width: 16px;
    height: 16px;
}

.tray-net {
    padding-right: 13px;
}

.tray-chevron {
    justify-content: flex-start;
}

.tray-keys {
    width: 22px;
    height: 14px;
    margin-top: 8px;
}

.clock {
    margin-top: 22px;
    font-size: 11.3px;
    line-height: 16px;
    text-align: center;
    white-space: nowrap;
}

.tray-action {
    width: 16px;
    height: 16px;
    margin-top: 19px;
}

.task-line {
    align-self: stretch;
    height: 1px;
    margin-top: 17px;
    background: #777;
}
```
